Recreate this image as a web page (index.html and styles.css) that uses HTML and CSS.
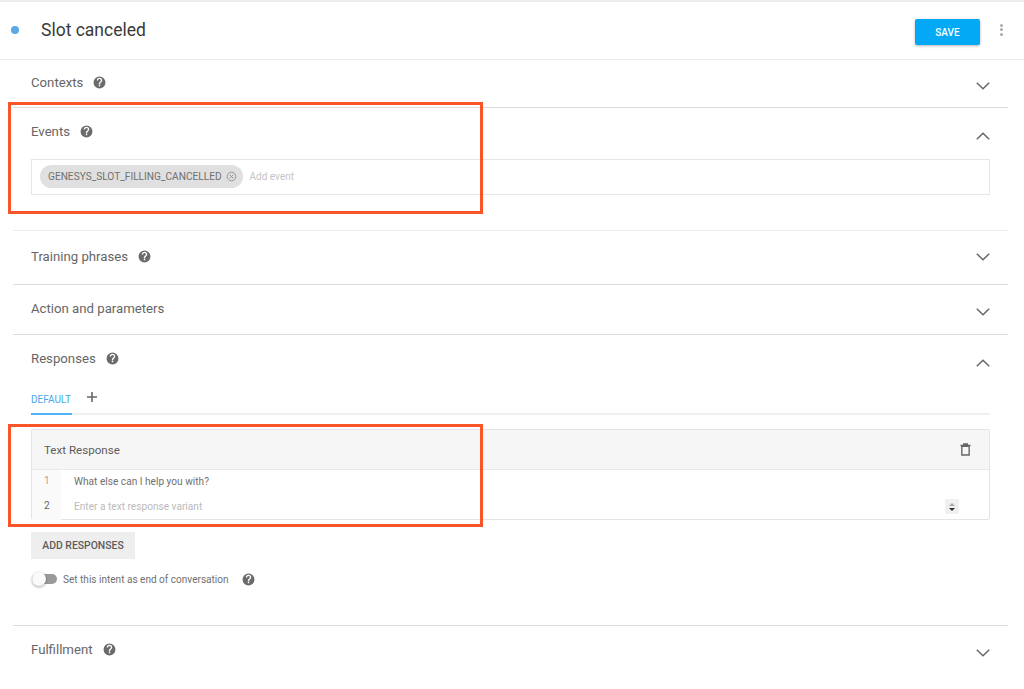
FILE: index.html
```html
<!DOCTYPE html>
<html lang="en">
<head>
<meta charset="utf-8">
<title>Slot canceled</title>
<link rel="stylesheet" href="styles.css">
</head>
<body>
<svg class="defs" width="0" height="0" aria-hidden="true">
  <symbol id="help" viewBox="0 0 24 24"><path fill="#6b6b6b" d="M12 1a11 11 0 1 0 0 22 11 11 0 0 0 0-22zm1.3 18h-2.600v-2.600h2.600V19zm2.700-8.300-1.200 1.200c-1 1-1.500 1.800-1.500 3.600h-2.600v-.6c0-1.400.5-2.700 1.500-3.700l1.600-1.600c.5-.4.7-1 .7-1.600A2.500 2.500 0 0 0 12 5.600a2.500 2.500 0 0 0-2.500 2.500H7a5 5 0 0 1 10 0c0 1-.4 1.900-1 2.600z"/></symbol>
  <symbol id="down" viewBox="0 0 14 8"><path fill="none" stroke="#666" stroke-width="1.500" d="M.8.8 7 6.800 13.200.8"/></symbol>
  <symbol id="up" viewBox="0 0 14 8"><path fill="none" stroke="#666" stroke-width="1.500" d="M.8 7.200 7 1.200l6.200 6"/></symbol>
</svg>
<main class="page">
  <header class="top">
    <span class="dot"></span>
    <h1 class="title">Slot canceled</h1>
    <button class="save">SAVE</button>
    <span class="more"><i></i><i></i><i></i></span>
  </header>

  <section class="sec sec-contexts">
    <div class="sec-head"><span class="sec-name">Contexts</span><svg class="help"><use href="#help"/></svg><svg class="chev"><use href="#down"/></svg></div>
  </section>

  <section class="sec sec-events">
    <div class="sec-head"><span class="sec-name">Events</span><svg class="help"><use href="#help"/></svg><svg class="chev"><use href="#up"/></svg></div>
    <div class="events-box">
      <span class="chip">GENESYS_SLOT_FILLING_CANCELLED
        <svg class="chip-x" viewBox="0 0 12 12"><circle cx="6" cy="6" r="4.700" fill="none" stroke="#8f8f8f"/><path stroke="#8f8f8f" d="M4 4l4 4M8 4l-4 4"/></svg>
      </span>
      <span class="add-event">Add event</span>
    </div>
  </section>

  <section class="sec sec-training">
    <div class="sec-head"><span class="sec-name">Training phrases</span><svg class="help"><use href="#help"/></svg><svg class="chev"><use href="#down"/></svg></div>
  </section>

  <section class="sec sec-action">
    <div class="sec-head"><span class="sec-name">Action and parameters</span><svg class="chev"><use href="#down"/></svg></div>
  </section>

  <section class="sec sec-responses">
    <div class="sec-head"><span class="sec-name">Responses</span><svg class="help"><use href="#help"/></svg><svg class="chev"><use href="#up"/></svg></div>
    <div class="tabs">
      <span class="tab">DEFAULT</span>
      <svg class="plus" viewBox="0 0 10 10"><path stroke="#666" stroke-width="1.600" d="M5 0v10M0 5h10"/></svg>
    </div>
    <div class="card">
      <div class="card-head">
        <span>Text Response</span>
        <svg class="trash" viewBox="0 0 12 14"><path fill="none" stroke="#666" stroke-width="1.500" d="M2 3.500h8V13H2zM.5 2.700h11M4 2.500V1h4v1.500"/></svg>
      </div>
      <div class="row">
        <span class="num num-first">1</span>
        <span class="txt">What else can I help you with?</span>
      </div>
      <div class="row">
        <span class="num">2</span>
        <span class="txt txt-ph">Enter a text response variant</span>
        <span class="stepper"><i class="st-up"></i><i class="st-down"></i></span>
      </div>
    </div>
    <button class="add-resp">ADD RESPONSES</button>
    <div class="end">
      <span class="toggle"><i></i></span>
      <span class="end-label">Set this intent as end of conversation</span>
      <svg class="help"><use href="#help"/></svg>
    </div>
  </section>

  <section class="sec sec-fulfill">
    <div class="sec-head"><span class="sec-name">Fulfillment</span><svg class="help"><use href="#help"/></svg><svg class="chev"><use href="#down"/></svg></div>
  </section>
</main>
<div class="mark mark-events"></div>
<div class="mark mark-text"></div>
</body>
</html>
```

FILE: styles.css
```css
* { box-sizing: border-box; }
html, body { margin: 0; height: 689px; overflow: hidden; background: #fff; }
body { font-family: Roboto, "Liberation Sans", sans-serif; color: #555; position: relative; }
.defs { position: absolute; }
.page { border-top: 2px solid #ececec; }

.top { height: 58px; display: flex; align-items: center; border-bottom: 1px solid #ececec; padding-left: 11px; }
.dot { width: 8px; height: 8px; border-radius: 50%; background: #5aa9e6; margin-top: -1px; }
.title { font-size: 17.500px; font-weight: 400; color: #3a3a3a; margin: 0 0 0 22px; flex: 1; position: relative; top: -1px; }
.save { width: 65px; height: 26px; border: 0; border-radius: 2px; background: #03a9f4; color: #fff; font: 500 10px Roboto, sans-serif; box-shadow: 0 1px 3px rgba(0,0,0,.3); padding: 1px 0 0; position: relative; top: 1px; }
.more { display: flex; flex-direction: column; gap: 1.500px; margin: 0 21px 0 20px; position: relative; top: -1px; }
.more i { width: 3px; height: 3px; border-radius: 50%; background: #a9a9a9; }

.sec { margin: 0 16px 0 13px; border-bottom: 1px solid #dcdcdc; padding: 0 18px; }
.sec-head { display: flex; align-items: center; }
.sec-name { font-size: 13.200px; color: #666; }
.help { width: 13px; height: 13px; margin-left: 10px; flex: none; }
.chev { width: 14px; height: 8px; margin-left: auto; flex: none; position: relative; }

.sec-contexts { height: 48px; }
.sec-contexts .sec-head { padding-top: 15px; }
.sec-contexts .chev { top: 3px; }

.sec-events { height: 123px; border-bottom-color: #ececec; }
.sec-events .sec-head { padding-top: 16px; }
.sec-events .chev { top: 4px; }
.events-box { margin-top: 20px; height: 36px; border: 1px solid #e6e6e6; display: flex; align-items: center; padding: 0 0 2px 8px; }
.chip { height: 23px; border-radius: 12px; background: #e0e0e0; color: #707070; font-size: 10.150px; display: flex; align-items: center; gap: 4px; padding: 0 6px 0 8px; }
.chip-x { width: 11px; height: 11px; }
.add-event { color: #c4c4c4; font-size: 10px; margin-left: 7px; }

.sec-training { height: 54px; }
.sec-training .sec-head { padding-top: 18px; }
.sec-action { height: 50px; }
.sec-action .sec-head { padding-top: 16px; }
.sec-action .chev { top: 3px; }

.sec-responses { height: 291px; }
.sec-responses .sec-head { padding-top: 16px; }
.sec-responses .chev { top: 4px; }
.tabs { margin-top: 16px; height: 33px; border-bottom: 2px solid #efefef; display: flex; align-items: flex-start; position: relative; }
.tab { color: #4aa8ec; font-size: 10px; height: 33px; width: 41px; border-bottom: 2px solid #4fb3f6; padding-top: 12px; white-space: nowrap; }
.plus { width: 10px; height: 10px; margin: 10px 0 0 15px; }
.card { margin-top: 14px; border: 1px solid #e4e4e4; border-radius: 2px; height: 91px; }
.card-head { height: 40px; background: #f6f6f6; border-bottom: 1px solid #e8e8e8; display: flex; align-items: center; justify-content: space-between; padding: 0 18px 0 12px; font-size: 11.600px; color: #5c5c5c; }
.trash { width: 11px; height: 13px; }
.row { height: 25px; display: flex; align-items: center; position: relative; font-size: 10.150px; }
.num { width: 29px; height: 100%; background: #fafafa; padding: 0 0 0 12px; line-height: 22px; color: #666; flex: none; }
.num-first { color: #b5a58a; }
.txt { margin-left: 13px; color: #707070; position: relative; top: -1px; }
.txt-ph { color: #bbb; }
.stepper { position: absolute; right: 30px; top: 4px; width: 14px; height: 15px; background: #f0f0f0; display: flex; flex-direction: column; align-items: center; justify-content: center; gap: 2px; }
.stepper i { width: 0; height: 0; border-left: 3px solid transparent; border-right: 3px solid transparent; }
.st-up { border-bottom: 3px solid #aaa; }
.st-down { border-top: 3px solid #333; }
.add-resp { display: block; margin-top: 12px; width: 104px; height: 27px; border: 0; background: #eeeeee; color: #5c5c5c; font: 500 10.400px Roboto, sans-serif; padding: 0; }
.end { display: flex; align-items: center; margin-top: 12px; height: 16px; }
.toggle { width: 25px; height: 10px; margin-left: 1px; background: #9a9a9a; border-radius: 5px; position: relative; flex: none; }
.toggle i { position: absolute; left: 0; top: -2px; width: 14px; height: 14px; border-radius: 50%; background: #fafafa; box-shadow: 0 1px 3px rgba(0,0,0,.35); }
.end-label { font-size: 10.050px; color: #707070; margin-left: 6px; }
.end .help { margin-left: 13px; }

.sec-fulfill { height: 63px; border-bottom: 0; }
.sec-fulfill .sec-head { padding-top: 16px; }
.sec-fulfill .chev { top: 3px; }

.mark { position: absolute; left: 8px; width: 475px; border: 3px solid #fa5528; pointer-events: none; }
.mark-events { top: 102px; height: 112px; }
.mark-text { top: 424px; height: 103px; }
```
